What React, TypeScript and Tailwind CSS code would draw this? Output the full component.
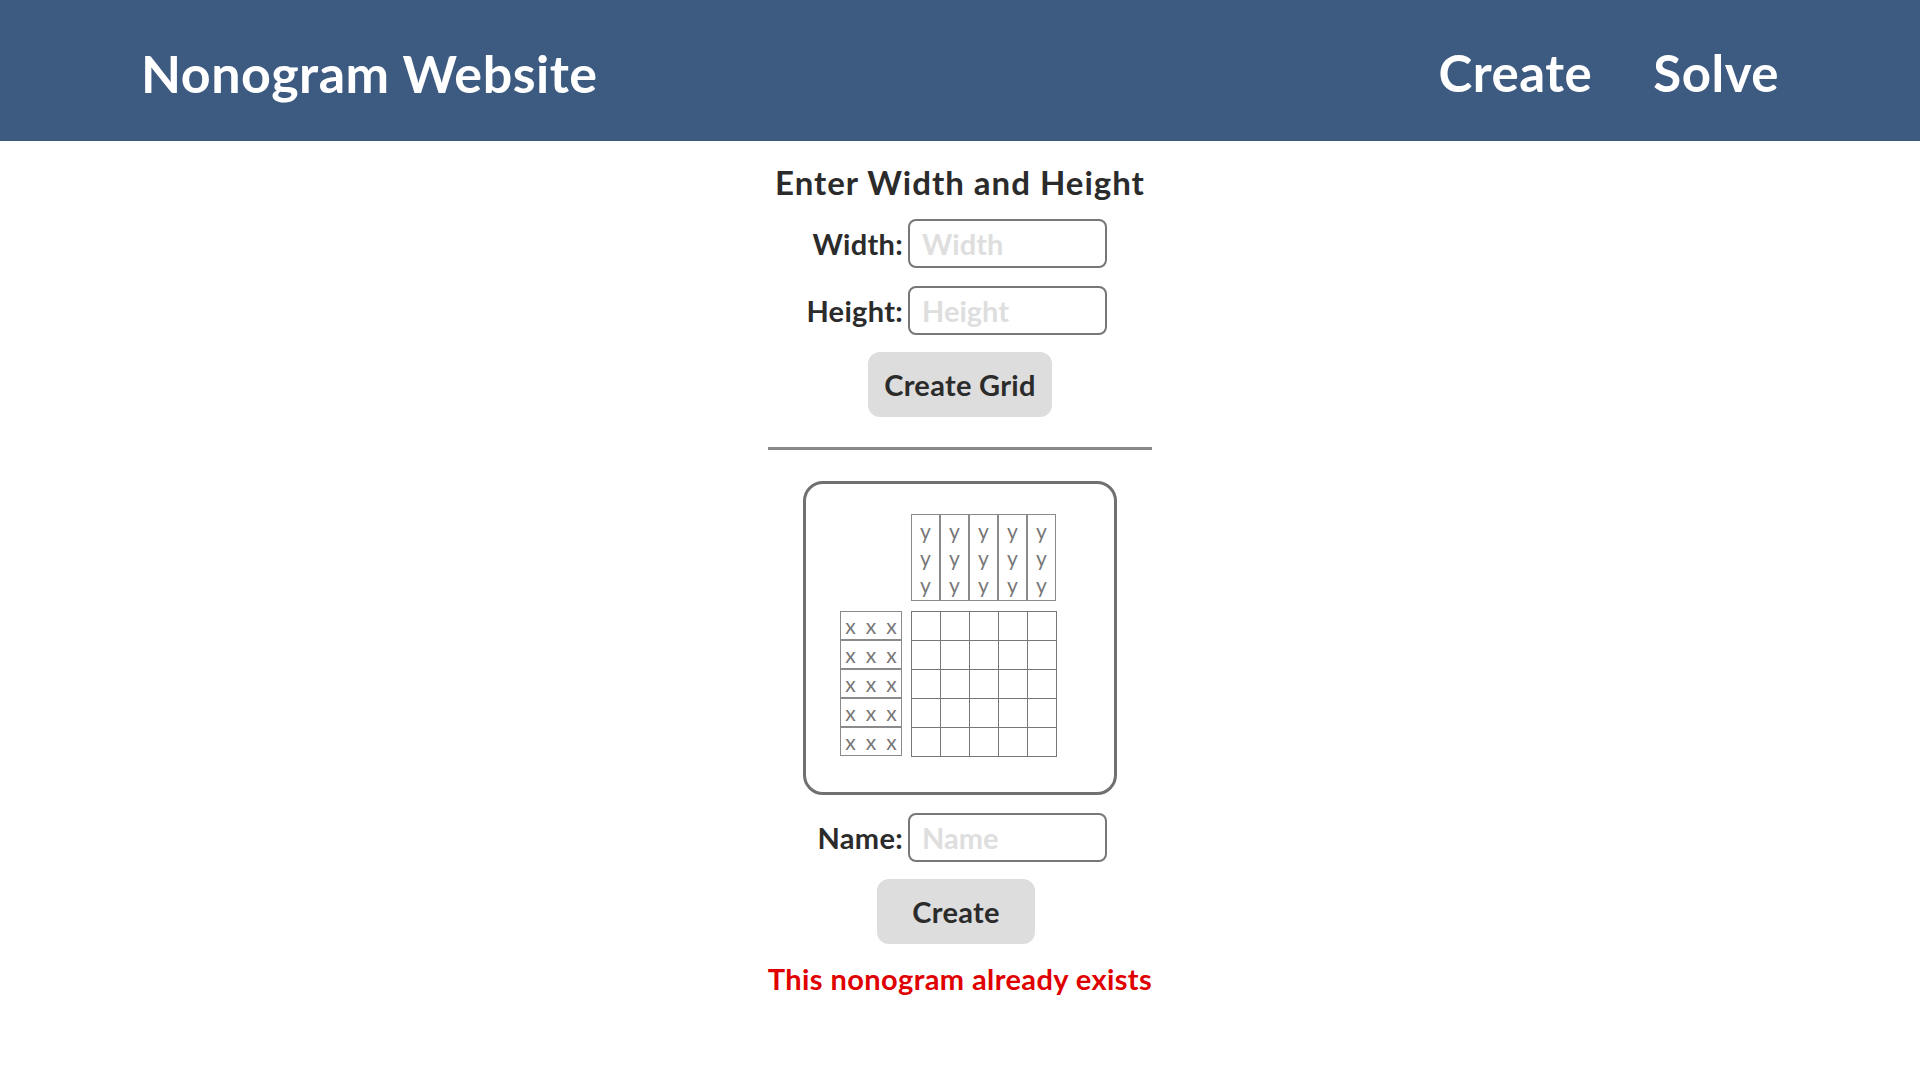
import React from "react";

const font = { fontFamily: "Lato, 'Open Sans', sans-serif" };

function Row({ label, placeholder }: { label: string; placeholder: string }) {
  return (
    <div className="flex items-center gap-[5px]">
      <div className="w-[90px] flex justify-end whitespace-nowrap">
        <label className="text-[29px] font-bold text-[#2b2b2b] leading-[36px] tracking-[0.3px]">{label}</label>
      </div>
      <input
        placeholder={placeholder}
        className="w-[199px] h-[49px] border-2 border-[#777777] rounded-[8px] px-[12px] text-[29px] font-bold text-[#2b2b2b] placeholder:text-[#dedede] outline-none bg-white"
      />
    </div>
  );
}

export default function App() {
  const cols = [0, 1, 2, 3, 4];
  return (
    <div className="min-h-[1080px] bg-white" style={font}>
      <header className="h-[141px] pt-[5px] bg-[#3d5a80] flex items-center justify-between px-[141px] text-white">
        <div className="text-[52px] font-bold leading-[60px] tracking-[0.5px]">Nonogram Website</div>
        <nav className="flex items-center gap-[61px] text-[51px] font-bold leading-[60px] tracking-[0.5px]">
          <a>Create</a>
          <a>Solve</a>
        </nav>
      </header>
      <main className="flex flex-col items-center">
        <h2 className="mt-[21px] text-[33px] font-bold leading-[40px] tracking-[1px] text-[#2b2b2b]">Enter Width and Height</h2>
        <div className="mt-[17px]">
          <Row label="Width:" placeholder="Width" />
        </div>
        <div className="mt-[18px]">
          <Row label="Height:" placeholder="Height" />
        </div>
        <button className="mt-[17px] w-[184px] h-[65px] rounded-[12px] bg-[#dddddd] text-[29px] font-bold text-[#2b2b2b] tracking-[0.3px]">
          Create Grid
        </button>
        <div className="mt-[30px] w-[384px] h-[3px] bg-[#888888]" />
        <div className="mt-[31px] w-[314px] h-[314px] border-[3px] border-[#707070] rounded-[20px] pl-[34px] pt-[30px]">
          <div className="grid grid-cols-[62px_146px] grid-rows-[87px_146px] gap-x-[9px] gap-y-[10px]">
            <div />
            <div className="flex">
              {cols.map((c) => (
                <div
                  key={c}
                  className="w-[29px] h-[87px] border border-[#8a8a8a] flex flex-col items-center justify-center text-[21px] leading-[27px] text-[#777777]"
                >
                  <span>y</span>
                  <span>y</span>
                  <span>y</span>
                </div>
              ))}
            </div>
            <div className="flex flex-col">
              {cols.map((r) => (
                <div
                  key={r}
                  className="w-[62px] h-[29px] border border-[#8a8a8a] flex items-center justify-center gap-[10px] text-[21px] leading-[26px] text-[#777777]"
                >
                  <span>x</span>
                  <span>x</span>
                  <span>x</span>
                </div>
              ))}
            </div>
            <div className="grid grid-cols-[repeat(5,28px)] grid-rows-[repeat(5,28px)] gap-px bg-[#777777] p-px w-[146px] h-[146px]">
              {Array.from({ length: 25 }).map((_, i) => (
                <div key={i} className="bg-white" />
              ))}
            </div>
          </div>
        </div>
        <div className="mt-[18px]">
          <Row label="Name:" placeholder="Name" />
        </div>
        <button className="mt-[17px] mr-[8px] w-[158px] h-[65px] rounded-[12px] bg-[#dddddd] text-[29px] font-bold text-[#2b2b2b] tracking-[0.3px]">
          Create
        </button>
        <p className="mt-[18px] text-[29px] font-bold leading-[34px] tracking-[0.4px] text-[#e00000]">This nonogram already exists</p>
      </main>
    </div>
  );
}
